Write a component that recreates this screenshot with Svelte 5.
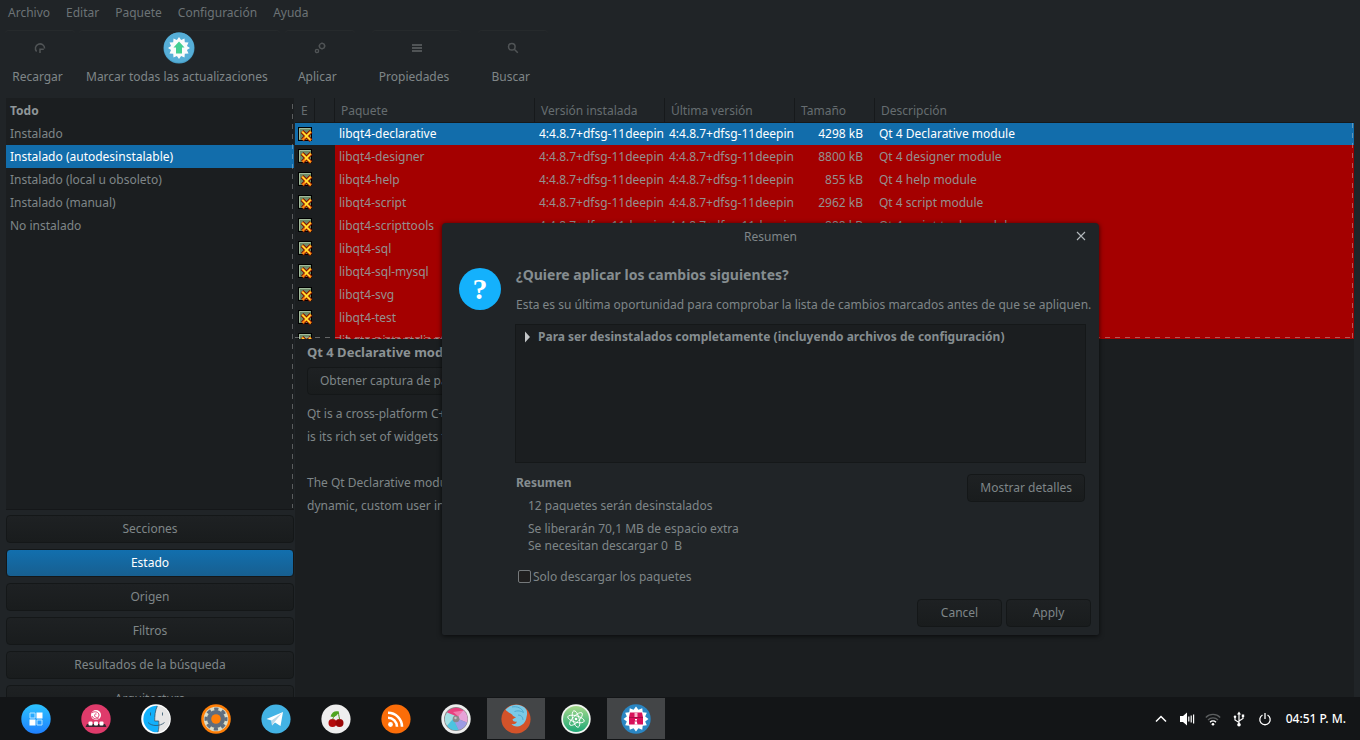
<script>
  const menus = ['Archivo', 'Editar', 'Paquete', 'Configuración', 'Ayuda'];
  const filters = ['Todo', 'Instalado', 'Instalado (autodesinstalable)', 'Instalado (local u obsoleto)', 'Instalado (manual)', 'No instalado'];
  const views = ['Secciones', 'Estado', 'Origen', 'Filtros', 'Resultados de la búsqueda', 'Arquitectura'];
  const version = '4:4.8.7+dfsg-11deepin';
  const packages = [
    ['libqt4-declarative', '4298 kB', 'Qt 4 Declarative module'],
    ['libqt4-designer', '8800 kB', 'Qt 4 designer module'],
    ['libqt4-help', '855 kB', 'Qt 4 help module'],
    ['libqt4-script', '2962 kB', 'Qt 4 script module'],
    ['libqt4-scripttools', '888 kB', 'Qt 4 script tools module'],
    ['libqt4-sql', '444 kB', 'Qt 4 SQL module'],
    ['libqt4-sql-mysql', '139 kB', 'Qt 4 MySQL database driver'],
    ['libqt4-svg', '471 kB', 'Qt 4 SVG module'],
    ['libqt4-test', '371 kB', 'Qt 4 test module'],
    ['libqtassistantclient4', '84 kB', 'Qt Assistant client library']
  ];
  let filter = $state(2);
  let view = $state(1);
  let selected = $state(0);

  function burst(cx, cy, outer, inner, points) {
    const out = [];
    for (let i = 0; i < points * 2; i++) {
      const r = i % 2 ? inner : outer;
      const a = (Math.PI * i) / points - Math.PI / 2;
      out.push((cx + r * Math.cos(a)).toFixed(2) + ',' + (cy + r * Math.sin(a)).toFixed(2));
    }
    return out.join(' ');
  }
</script>

<div class="window">
  <nav class="menubar" aria-label="Menú">
    {#each menus as m}<button>{m}</button>{/each}
  </nav>

  <div class="toolbar">
    <button class="tool">
      <span class="ico"><svg width="12" height="12" viewBox="0 0 12 12" fill="none" stroke="#505456" stroke-width="1.5"><path d="M2.600 9.600A4.600 4.600 0 1 1 10.600 6.500" /><path d="M6 11V7.200H9.800" /></svg></span>
      <span class="lbl">Recargar</span>
    </button>
    <button class="tool">
      <span class="ico"><svg width="32" height="32" viewBox="0 0 32 32"><circle cx="16" cy="16" r="15.5" fill="#489fc8" /><circle cx="16" cy="15.5" r="15" fill="#56aed7" /><polygon points={burst(16, 16, 11, 8.2, 12)} fill="#fbfbfb" /><path d="M16 9.5l5.5 6H19v6h-6v-6h-2.500z" fill="#45cf92" /></svg></span>
      <span class="lbl">Marcar todas las actualizaciones</span>
    </button>
    <button class="tool apply">
      <span class="ico"><svg width="12" height="12" viewBox="0 0 12 12" fill="none" stroke="#505456" stroke-width="1.4"><circle cx="8" cy="4" r="2.600" /><circle cx="3" cy="9" r="1.600" /><path d="M8 .4v1M8 6.700v1M4.500 4h1M10.500 4h1" stroke-width="1" /></svg></span>
      <span class="lbl">Aplicar</span>
    </button>
    <button class="tool spaced">
      <span class="ico"><svg width="12" height="12" viewBox="0 0 12 12" fill="#505456"><path d="M1 2h10v2H1zM1 5h10v2H1zM1 8h10v2H1z" /></svg></span>
      <span class="lbl">Propiedades</span>
    </button>
    <button class="tool spaced">
      <span class="ico"><svg width="12" height="12" viewBox="0 0 12 12" fill="none" stroke="#505456" stroke-width="1.500"><circle cx="4.800" cy="4.800" r="3.300" /><path d="M7.300 7.300l3.500 3.500" /></svg></span>
      <span class="lbl">Buscar</span>
    </button>
  </div>

  <div class="body">
    <aside>
      <ul class="filters">
        {#each filters as f, i}
          <li><button class:on={filter === i} class:bold={i === 0} onclick={() => (filter = i)}>{f}</button></li>
        {/each}
      </ul>
      {#each views as v, i}
        <button class="btn" class:active={view === i} onclick={() => (view = i)}>{v}</button>
      {/each}
    </aside>

    <main>
      <div class="list">
        <table>
          <colgroup><col class="c-e" /><col class="c-s" /><col class="c-p" /><col class="c-v" /><col class="c-v" /><col class="c-t" /><col /></colgroup>
          <thead>
            <tr><th>E</th><th></th><th>Paquete</th><th>Versión instalada</th><th>Última versión</th><th>Tamaño</th><th>Descripción</th></tr>
          </thead>
          <tbody>
            {#each packages as p, i}
              <tr class:sel={selected === i} onclick={() => (selected = i)}>
                <td class="mark"><svg width="15" height="15" viewBox="0 0 15 15"><rect x=".5" y=".5" width="13" height="13" fill="#6d8c68" stroke="#000" /><path d="M1.500 12.500V1.500h11" fill="none" stroke="#a3bb9c" /><path d="M4 4.500l9 9M13 4.500L4.500 13" stroke="#7d1400" stroke-width="4" /><path d="M4 4.500l9 9M13 4.500L4.500 13" stroke="#ff8c10" stroke-width="2.200" /><path d="M4.500 5l7.500 7.500M12.500 5L7 10.500" stroke="#ffe838" stroke-width="1.200" /></svg></td>
                <td class="mark"></td>
                <td>{p[0]}</td>
                <td>{version}</td>
                <td>{version}</td>
                <td class="num">{p[1]}</td>
                <td>{p[2]}</td>
              </tr>
            {/each}
          </tbody>
        </table>
      </div>
      <section class="details">
        <h3>Qt 4 Declarative module</h3>
        <button class="btn shot">Obtener captura de pantalla</button>
        <p>Qt is a cross-platform C++ application framework. Qt's primary feature<br />is its rich set of widgets that provide standard GUI functionality.</p>
        <p>The Qt Declarative module provides a declarative framework for building highly<br />dynamic, custom user interfaces.</p>
      </section>
    </main>
  </div>

  <div class="dialog" role="dialog" aria-labelledby="dlg-title">
    <header>
      <h2 id="dlg-title">Resumen</h2>
      <button class="close" aria-label="Cerrar"><svg width="10" height="10" viewBox="0 0 10 10" stroke="#b4babd" stroke-width="1.100"><path d="M1 1l8 8M9 1L1 9" /></svg></button>
    </header>
    <div class="content">
      <span class="question">?</span>
      <div class="info">
        <h1>¿Quiere aplicar los cambios siguientes?</h1>
        <p class="lead">Esta es su última oportunidad para comprobar la lista de cambios marcados antes de que se apliquen.</p>
        <div class="tree">
          <button><svg width="7" height="12" viewBox="0 0 7 12"><path d="M1 .5L6 6 1 11.500z" fill="#c3c6c8" /></svg>Para ser desinstalados completamente (incluyendo archivos de configuración)</button>
        </div>
        <div class="summary">
          <div>
            <h4>Resumen</h4>
            <p class="removed">12 paquetes serán desinstalados</p>
            <p class="space">Se liberarán 70,1 MB de espacio extra<br />Se necesitan descargar 0&nbsp; B</p>
          </div>
          <button class="btn">Mostrar detalles</button>
        </div>
        <label class="check"><input type="checkbox" />Solo descargar los paquetes</label>
      </div>
    </div>
    <footer>
      <button class="btn">Cancel</button>
      <button class="btn">Apply</button>
    </footer>
  </div>

  <div class="dock">
    <button class="app" aria-label="Lanzador"><svg viewBox="0 0 30 30"><defs><linearGradient id="g1" x2="0" y2="1"><stop stop-color="#2cc3ff" /><stop offset="1" stop-color="#1f80ff" /></linearGradient></defs><circle cx="15" cy="15" r="14.700" fill="url(#g1)" /><path d="M15.500 8.500h6v6h-6zM8.500 15.500h6v6h-6z" fill="#fff" /><path d="M9 9h5v5h-5zM16 16h5v5h-5z" fill="none" stroke="#b5e3ff" /></svg></button>
    <button class="app" aria-label="Tienda"><svg viewBox="0 0 30 30"><circle cx="15" cy="15" r="14.700" fill="#df3b6b" /><circle cx="15" cy="11" r="5" fill="#fff" /><path d="M11 8.500c3-1.500 7-.5 7 2.500s-3 3-4 1.500 0-3 1.500-2.500M11 12c1 3 5 4 7 1.500" fill="none" stroke="#df3b6b" stroke-width="1" /><path d="M6 20h18l1.500 3h-21z" fill="#3a2531" /><rect x="7.500" y="17.500" width="4" height="4" rx="1" fill="#fff" /><rect x="13" y="17.500" width="4" height="4" rx="1" fill="#fff" /><rect x="18.500" y="17.500" width="4" height="4" rx="1" fill="#fff" /></svg></button>
    <button class="app" aria-label="Archivos"><svg viewBox="0 0 30 30"><circle cx="15" cy="15" r="14.800" fill="#fff" /><path d="M16.500 1.700A13.300 13.300 0 1 0 17 28.200c.8-3 1-6 .7-9v-2.200h-4C13.800 12 14.500 6 16.500 1.700z" fill="#12b0fb" /><path d="M16.500 1.700C14.500 6 13.800 12 13.700 17h4c.3 4 .1 8-.7 11.200A13.300 13.300 0 0 0 16.500 1.700z" fill="#e6e6e6" /><path d="M9.500 8.500v3M21.500 8.500v3M7 18.500c4 4 12 4 16.500 0M16.300 2C14 7 13.700 12 13.700 17h4c.4 4 .1 8-.7 11" fill="none" stroke="#2d536b" stroke-width=".8" /></svg></button>
    <button class="app" aria-label="Configuración del sistema"><svg viewBox="0 0 30 30"><circle cx="15" cy="15" r="14.800" fill="#ff7f08" /><circle cx="15" cy="15" r="12.300" fill="#dcdcc6" /><circle cx="15" cy="15" r="9" fill="#5f6d7e" /><circle cx="15" cy="15" r="10" fill="none" stroke="#5f6d7e" stroke-width="3" stroke-dasharray="4.200 3.654" stroke-dashoffset="2.100" /><circle cx="15" cy="15" r="4.800" fill="#ff7f08" /></svg></button>
    <button class="app" aria-label="Telegram"><svg viewBox="0 0 30 30"><circle cx="15" cy="15" r="14.600" fill="#43b3e5" /><path d="M5.500 15L22 8 19.500 22 14 18.500l-3 3-.5-5z" fill="#fff" /><path d="M10.500 16.500L21 9l-7.500 9-2.500 3.500z" fill="#bcd8e8" /></svg></button>
    <button class="app" aria-label="CherryTree"><svg viewBox="0 0 30 30"><circle cx="15" cy="15" r="14.600" fill="#eee" /><circle cx="11.500" cy="19" r="4" fill="#b30b0b" /><circle cx="18.500" cy="19" r="4" fill="#9b0606" /><path d="M11.500 15.500c1-3 3-5 6-7 0 3 1 5 1 7" fill="none" stroke="#4d8b22" stroke-width="1" /><path d="M18 7.500c-4-1-7 0-8.500 5 4 1.500 7-1 8.500-5z" fill="#4fa51f" /></svg></button>
    <button class="app" aria-label="Noticias"><svg viewBox="0 0 30 30"><circle cx="15" cy="15" r="14.600" fill="#fb6d09" /><circle cx="9.500" cy="20.500" r="2.400" fill="#fff" /><path d="M7 13.800a9 9 0 0 1 9 9M7 8.800a14 14 0 0 1 14 14" fill="none" stroke="#fff" stroke-width="2.600" /></svg></button>
    <button class="app" aria-label="Imágenes"><svg viewBox="0 0 30 30"><circle cx="15" cy="15" r="14.700" fill="#ededed" /><circle cx="15" cy="15" r="12" fill="#8c8889" /><path d="M6 8.500A11.300 11.300 0 0 1 22.500 6.500L17.500 12.500 13 11.500z" fill="#e8407f" /><path d="M12 8l10.500-1.500 2 2-7 4z" fill="#f27aae" /><path d="M22.500 6.500A11.300 11.300 0 0 1 26 18.500L18.500 15.500 17.500 12z" fill="#e7a3d8" /><path d="M26 18.500A11.300 11.300 0 0 1 17.500 26L13.500 18.500l5-3z" fill="#9c9ce4" /><path d="M17.500 26A11.300 11.300 0 0 1 6 21.800L11.500 14.500l2.500 4z" fill="#4cc4e0" /><path d="M6 21.800A11.300 11.300 0 0 1 6 8.500L13.500 11.500l-2 4z" fill="#a2dfe3" /><circle cx="15" cy="15" r="3.300" fill="#8a8a8c" /><circle cx="14.500" cy="14" r="1.200" fill="#c5c5c8" /></svg></button>
    <button class="app running" aria-label="Firefox"><svg viewBox="0 0 30 30"><circle cx="15" cy="15" r="14.600" fill="#d3532a" /><path d="M4.500 5.500C9 1 15-.5 21 2c5 2 6 6 4.500 11-.5 5-4 9-9 9.500-3 .2-5-.8-6-2.500 3 .5 5-.5 5.500-2.500-2 .5-4 0-4.500-2 .5-1 2-1 3.500-2-1-1-3-1-4-3C9.500 9 6 8 4.500 5.500z" fill="#7bc9e6" /><path d="M11 3c5-1 10 1 11.500 5.500-3-2-6-2-9-1M17 11c3 0 5 2 5 5" fill="none" stroke="#4fa9cf" stroke-width="1" /></svg></button>
    <button class="app" aria-label="Atom"><svg viewBox="0 0 30 30"><defs><linearGradient id="g2" x2="0" y2="1"><stop stop-color="#a5d98b" /><stop offset="1" stop-color="#1da876" /></linearGradient></defs><circle cx="15" cy="15" r="14.700" fill="#f2f6f2" /><circle cx="15" cy="15" r="13" fill="url(#g2)" /><g fill="none" stroke="#fff" stroke-width=".9"><ellipse cx="15" cy="15" rx="8.500" ry="3.200" transform="rotate(15 15 15)" /><ellipse cx="15" cy="15" rx="8.500" ry="3.200" transform="rotate(75 15 15)" /><ellipse cx="15" cy="15" rx="8.500" ry="3.200" transform="rotate(135 15 15)" /></g><circle cx="15" cy="15" r="1.300" fill="#fff" /></svg></button>
    <button class="app running" aria-label="Synaptic"><svg viewBox="0 0 30 30"><circle cx="15" cy="15" r="14.700" fill="#2a86c3" /><polygon points={burst(15, 15, 12.5, 9.5, 12)} fill="#fff" /><path d="M9 8.500h12l1 4.500v7.500H8V13z" fill="#d8115a" /><path d="M8 13h14v1H8z" fill="#a90b46" /><path d="M13.500 8.500h3v4.500h-3z" fill="#f5b5c8" /><path d="M14 15h2v1.500h-2zM13.500 17.500H16v2h.5v1h-3v-1h.5z" fill="#fff" /></svg></button>
    <div class="tray">
      <svg viewBox="0 0 16 16" fill="none" stroke="#fff" stroke-width="1.500"><path d="M3 10.500l5-5 5 5" /></svg>
      <svg viewBox="0 0 16 16" fill="#fff"><path d="M1 5h3l4-3.500v13L4 11H1z" /><path d="M9.200 5.500h1.200v5H9.200zM11.600 4.500h1.200v7h-1.200zM14 3.500h1.200v9H14z" /></svg>
      <svg viewBox="0 0 16 16" fill="none" stroke-width="1.300"><path d="M.8 6.500a10 10 0 0 1 14.400 0M3 9a7 7 0 0 1 10 0" stroke="#5c5f60" /><path d="M5 11.200a4.300 4.300 0 0 1 6 0" stroke="#fff" /><circle cx="8" cy="13.300" r="1.300" fill="#fff" /></svg>
      <svg viewBox="0 0 16 16" fill="none" stroke="#fff" stroke-width="1.200"><path d="M8 2v11M8 11.500L4 9V6M8 10l4-2.500V5" /><path d="M8 .5L10 3.500H6zM10.800 3.500h2.400v2.400h-2.400z" fill="#fff" stroke="none" /><circle cx="4" cy="5.800" r="1.300" fill="#fff" stroke="none" /><circle cx="8" cy="13.800" r="1.800" fill="#fff" stroke="none" /></svg>
      <svg viewBox="0 0 16 16" fill="none" stroke="#fff" stroke-width="1.300"><path d="M5.500 4A5.200 5.200 0 1 0 10.500 4M8 2v6" /></svg>
      <time>04:51 P. M.</time>
    </div>
  </div>
</div>

<style>
  :global(body) { margin: 0; background: #202326; }
  * { box-sizing: border-box; }
  .window { position: relative; height: 100vh; min-height: 740px; overflow: hidden; display: flex; flex-direction: column; background: #202427; color: #7f8688; font: 12px/23px "Noto Sans", sans-serif; }
  button { font: inherit; color: inherit; background: none; border: 0; padding: 0; margin: 0; }
  h1, h2, h3, h4, p, ul { margin: 0; padding: 0; font-size: inherit; }
  svg { display: block; }

  .menubar { display: flex; gap: 16px; padding: 1px 8px; height: 30px; align-items: flex-start; color: #6c7376; }
  .toolbar { display: flex; gap: 4px; padding: 0 5px; height: 68px; }
  .tool { min-width: 70px; height: 59px; display: flex; flex-direction: column; border-top: 1px solid #262a2c; border-radius: 4px; }
  .tool.spaced { margin-left: 13px; }
  .tool.apply { margin-left: 1px; }
  .ico { height: 34px; width: 100%; display: grid; place-items: center; }
  .lbl { width: 100%; padding: 0 12px 0 7px; text-align: center; white-space: nowrap; }

  .body { flex: 1; min-height: 0; display: grid; grid-template-columns: 288px minmax(0, 1fr); gap: 1px; padding: 0 6px; }
  aside { display: flex; flex-direction: column; gap: 6px; padding-bottom: 27px; min-height: 0; }
  .filters { position: relative; flex: 1; list-style: none; background: #1b1e20; border-bottom: 1px solid #151719; padding-top: 1px; margin-bottom: -1px; }
  .filters::after { content: ""; position: absolute; inset: 6px 1px 1px auto; width: 1px; background: repeating-linear-gradient(rgba(255, 255, 255, 0.28) 0 5px, transparent 5px 10px); pointer-events: none; }
  .filters button { display: block; width: 100%; height: 23px; padding: 0 4px; text-align: left; }
  .filters .on { background: #126dab; color: #fff; }
  .filters .bold { font-weight: 700; color: #8f9699; }
  .btn { height: 28px; padding: 0 12px; border: 1px solid #141718; border-radius: 4px; background: linear-gradient(#1e2123, #191c1d); line-height: 24px; white-space: nowrap; flex: none; }
  .btn.active { background: linear-gradient(#126fae, #175f90); color: #fff; }

  main { min-width: 0; display: flex; flex-direction: column; background: #1b1e20; }
  .list { position: relative; height: 241px; overflow: hidden; }
  .list::after { content: ""; position: absolute; inset: 25px 1px 1px 0; background: repeating-linear-gradient(rgba(210, 210, 210, 0.4) 0 5px, transparent 5px 10px) right / 1px 100% no-repeat, repeating-linear-gradient(90deg, rgba(210, 210, 210, 0.4) 0 5px, transparent 5px 10px) bottom / 100% 1px no-repeat; pointer-events: none; }
  table { width: 100%; border-collapse: separate; border-spacing: 0; table-layout: fixed; }
  .c-e, .c-s { width: 20px; }
  .c-p { width: 200px; }
  .c-v { width: 130px; }
  .c-t { width: 80px; }
  th { height: 24px; padding: 0 0 0 6px; text-align: left; font-weight: 400; color: #666d70; background: #202427; border-right: 1px solid #16191b; white-space: nowrap; }
  th:last-child { border-right: 0; }
  td { height: 23px; padding: 0 0 0 4px; background: #a40000; color: #94908f; white-space: nowrap; overflow: hidden; }
  td.mark { background: #1b1e20; padding: 0 0 0 3px; }
  td.num { text-align: right; padding-right: 12px; }
  .sel td, .sel td.mark { background: #126dab; color: #fff; border-top: 1px solid #16191b; line-height: 22px; }

  .details { flex: 1; padding: 2px 12px; }
  .details h3 { color: #8b9294; font-size: 13px; font-weight: 700; }
  .shot { display: block; margin: 3px 0 7px; }
  .details p + p { margin-top: 23px; }

  .dialog { position: absolute; left: 442px; top: 223px; width: 657px; background: #202427; border-radius: 4px 4px 2px 2px; box-shadow: 0 1px 5px rgba(0, 0, 0, 0.7); padding-bottom: 8px; }
  header { position: relative; height: 28px; text-align: center; line-height: 28px; }
  header h2 { font-weight: 400; }
  .close { position: absolute; right: 13px; top: 8px; }
  .content { display: flex; gap: 14px; padding: 12px 13px 0 17px; }
  .question { flex: none; width: 42px; height: 42px; margin-top: 5px; border-radius: 50%; background: #14b1fc; color: #fff; text-align: center; font: 700 30px/41px "Liberation Serif", serif; }
  .info { flex: 1; min-width: 0; }
  h1 { font-size: 14px; font-weight: 700; padding-left: 1px; color: #858d90; }
  .lead { padding: 7px 0 8px 1px; white-space: nowrap; }
  .tree { height: 139px; border: 1px solid #151819; background: #1b1e20; padding: 0 8px; }
  .tree button { display: flex; align-items: center; gap: 7px; font-weight: 700; color: #858d90; white-space: nowrap; }
  .summary { display: flex; justify-content: space-between; align-items: flex-start; padding: 8px 1px 0 1px; }
  .summary .btn { margin-top: 3px; }
  h4 { font-weight: 700; color: #858d90; }
  .removed { padding-left: 12px; }
  .space { padding: 3px 0 0 12px; line-height: 17px; }
  .check { display: flex; align-items: center; gap: 2px; margin-top: 11px; padding-left: 3px; }
  input { appearance: none; width: 13px; height: 13px; margin: 0; border: 1px solid #75797b; border-radius: 2px; background: #201f1f; }
  footer { display: flex; justify-content: flex-end; gap: 4px; padding: 11px 8px 0; }
  footer .btn { width: 85px; }

  .dock { position: absolute; inset: auto 0 0 0; height: 43px; display: flex; gap: 2px; padding: 1px 14px 1px 7px; background: #131517; }
  .app { width: 58px; display: grid; place-items: center; }
  .app svg { width: 30px; height: 30px; }
  .running { background: #434547; }
  .tray { margin-left: auto; display: flex; align-items: center; gap: 10px; }
  .tray svg { width: 16px; height: 16px; }
  time { color: #fff; font-weight: 500; padding-left: 3px; white-space: nowrap; }
</style>
